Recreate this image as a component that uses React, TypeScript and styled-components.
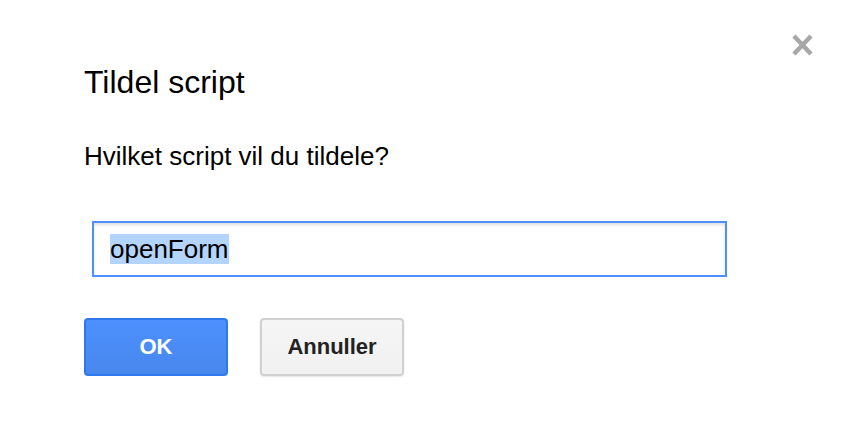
import React from 'react';
import styled, { createGlobalStyle } from 'styled-components';

const GlobalStyle = createGlobalStyle`
  html, body {
    margin: 0;
    padding: 0;
    background: #ffffff;
  }
  body {
    font-family: 'Liberation Sans', Arial, sans-serif;
  }
`;

const Dialog = styled.div`
  position: relative;
  width: 846px;
  height: 432px;
  box-sizing: border-box;
  padding: 64px 0 0 84px;
  background: #fff;
  color: #222;
`;

const CloseButton = styled.button`
  position: absolute;
  top: 34px;
  left: 791px;
  width: 23px;
  height: 22px;
  padding: 0;
  border: none;
  background: transparent;
  cursor: pointer;
  opacity: 0.75;
`;

const Title = styled.h1`
  margin: 0;
  font-size: 32px;
  line-height: 36px;
  font-weight: normal;
  color: #000;
`;

const Prompt = styled.p`
  margin: 41px 0 0;
  font-size: 26px;
  line-height: 30px;
  color: #000;
`;

const Field = styled.div`
  margin: 50px 0 0 8px;
  width: 635px;
  height: 56px;
  box-sizing: border-box;
  border: 2px solid #4d90fe;
  box-shadow: inset 0 2px 3px rgba(0, 0, 0, 0.12);
  padding: 11px 14px 11px 16px;
  font-size: 26px;
  line-height: 30px;
  color: #000;
`;

const Selected = styled.span`
  background: #b3d4fc;
`;

const Actions = styled.div`
  display: flex;
  gap: 32px;
  margin-top: 41px;
`;

const Button = styled.button<{ $primary?: boolean }>`
  width: 144px;
  height: 58px;
  box-sizing: border-box;
  border-radius: 4px;
  font-family: 'Liberation Sans', Arial, sans-serif;
  font-size: 22px;
  font-weight: bold;
  cursor: pointer;
  border: 2px solid ${({ $primary }) => ($primary ? '#3079ed' : '#d0d0d0')};
  color: ${({ $primary }) => ($primary ? '#fff' : '#222')};
  background: ${({ $primary }) =>
    $primary
      ? 'linear-gradient(#4d90fe, #4787ed)'
      : 'linear-gradient(#f5f5f5, #f1f1f1)'};
  box-shadow: ${({ $primary }) => ($primary ? 'none' : '0 1px 2px rgba(0,0,0,0.1)')};
`;

export default function App() {
  return (
    <>
      <GlobalStyle />
      <Dialog>
        <CloseButton aria-label="Lukk">
          <svg width="23" height="22" viewBox="0 0 23 22">
            <path d="M3 2 L20 20 M20 2 L3 20" stroke="#8a8a8a" strokeWidth="4.5" />
          </svg>
        </CloseButton>
        <Title>Tildel script</Title>
        <Prompt>Hvilket script vil du tildele?</Prompt>
        <Field>
          <Selected>openForm</Selected>
        </Field>
        <Actions>
          <Button $primary>OK</Button>
          <Button>Annuller</Button>
        </Actions>
      </Dialog>
    </>
  );
}
